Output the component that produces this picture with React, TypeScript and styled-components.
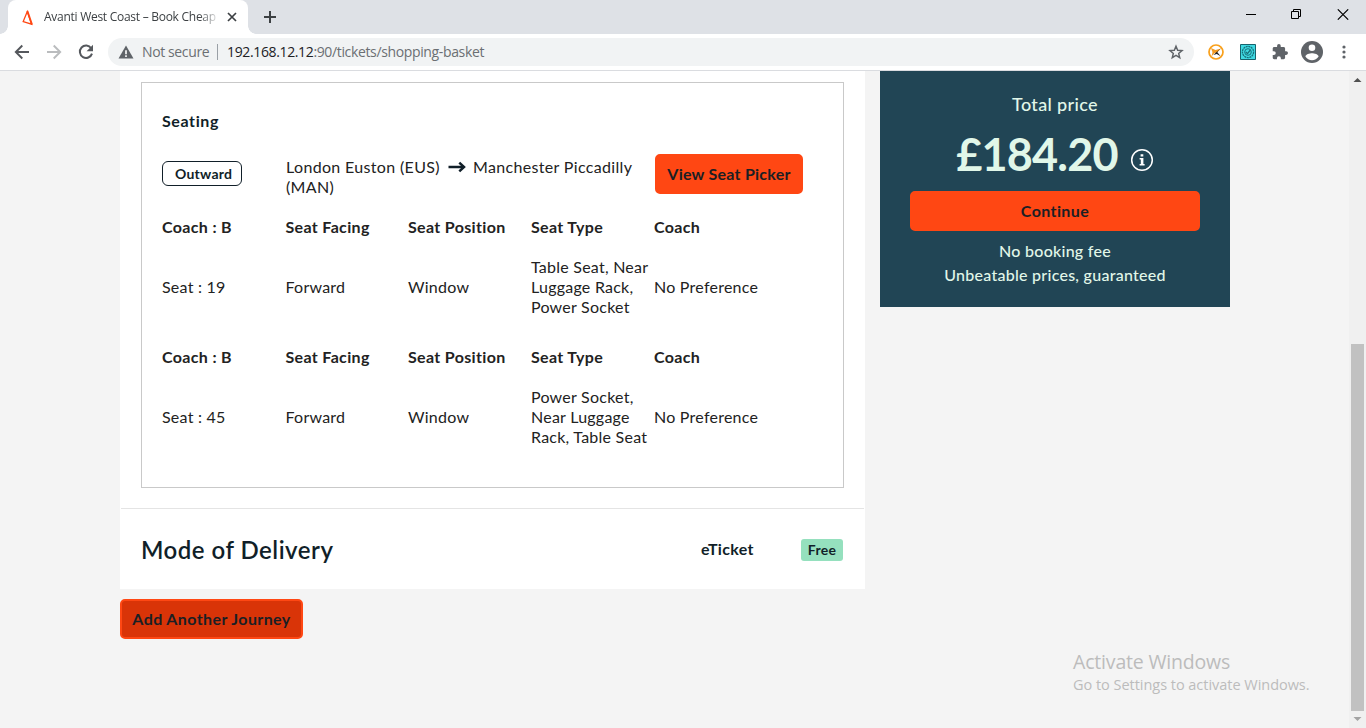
import React from 'react';
import styled, { createGlobalStyle } from 'styled-components';

const brandFont = `Lato, "Liberation Sans", sans-serif`;
const systemFont = `"Open Sans", "Noto Sans", sans-serif`;
const ink = '#111f29';

const GlobalStyle = createGlobalStyle`
  * { box-sizing: border-box; }
  body { margin: 0; background: #f4f4f4; overflow: hidden; }
  button { font: inherit; border: 0; padding: 0; margin: 0; background: none; }
  svg { display: block; flex: none; }
`;

const Window = styled.div`
  display: flex;
  flex-direction: column;
  width: 1366px;
  height: 728px;
  overflow: hidden;
  position: relative;
  font-family: ${brandFont};
`;

/* Browser frame */
const TabStrip = styled.div`
  display: flex;
  height: 34px;
  background: #dee1e6;
  padding-left: 8px;
  flex: none;
`;
const Tab = styled.div`
  display: flex;
  align-items: center;
  width: 240px;
  background: #fff;
  border-radius: 8px 8px 0 0;
  padding-left: 13px;
  position: relative;
  &::before, &::after {
    content: '';
    position: absolute;
    bottom: 0;
    width: 8px;
    height: 8px;
  }
  &::before { left: -8px; background: radial-gradient(circle at 0 0, #dee1e6 7.5px, #fff 8px); }
  &::after { right: -8px; background: radial-gradient(circle at 100% 0, #dee1e6 7.5px, #fff 8px); }
`;
const TabTitle = styled.span`
  width: 173px;
  margin-left: 9px;
  overflow: hidden;
  white-space: nowrap;
  font: 400 12px/16px ${systemFont};
  letter-spacing: -0.27px;
  color: #3c4043;
  mask-image: linear-gradient(to right, #000 155px, transparent 176px);
`;
const TabClose = styled.button`
  margin-left: 10px;
  height: 10px;
`;
const NewTab = styled.button`
  margin-left: 16px;
  align-self: center;
`;
const WindowControls = styled.div`
  display: flex;
  align-items: center;
  gap: 35px;
  margin-left: auto;
  padding: 0 17px 5px 0;
`;
const Toolbar = styled.div`
  display: flex;
  align-items: center;
  height: 37px;
  padding: 0 10px 1px 14px;
  background: #fff;
  border-bottom: 1px solid #dadce0;
  flex: none;
`;
const NavButtons = styled.div`
  display: flex;
  align-items: center;
  gap: 16px;
  width: 94px;
`;
const AddressBar = styled.div`
  display: flex;
  align-items: center;
  width: 1086px;
  height: 28px;
  padding: 0 10px 0 10px;
  border-radius: 14px;
  background: #f1f3f4;
  font: 400 14px/20px ${systemFont};
  color: #6b6f73;
`;
const NotSecure = styled.span`
  margin-left: 8px;
  width: 67px;
  letter-spacing: -0.38px;
  white-space: nowrap;
`;
const AddressDivider = styled.span`
  width: 1px;
  height: 16px;
  margin: 0 9px 0 8px;
  background: #9aa0a6;
`;
const Url = styled.span`
  flex: 1;
  letter-spacing: -0.36px;
  b { font-weight: 400; color: #202124; }
`;
const Extensions = styled.div`
  display: flex;
  align-items: center;
  margin-left: 14px;
  gap: 16px;
`;
const ProfileIcon = styled.div`margin: 0 3px 0 -3px;`;

/* Page */
const Viewport = styled.div`
  display: flex;
  flex: 1;
  min-height: 0;
`;
const Page = styled.main`
  display: flex;
  align-items: flex-start;
  gap: 15px;
  flex: 1;
  padding-left: 120px;
  background: #f4f4f4;
  color: #222;
`;
const Basket = styled.section`width: 745px;`;
const Card = styled.div`
  height: 518px;
  padding-top: 11px;
  background: #fff;
`;
const SeatingBox = styled.div`
  width: 703px;
  height: 406px;
  margin-left: 21px;
  padding: 28px 20px 0;
  border: 1px solid #c9c9c9;
`;
const SeatingTitle = styled.h3`
  margin: 0;
  font-size: 16px;
  line-height: 20px;
  font-weight: 700;
  letter-spacing: 0.6px;
  color: ${ink};
`;
const RouteRow = styled.div`
  display: flex;
  height: 40px;
  margin-top: 23px;
`;
const Direction = styled.span`
  width: 80px;
  height: 25px;
  margin-top: 7px;
  padding-left: 12px;
  border: 1px solid ${ink};
  border-radius: 6px;
  font-size: 14px;
  line-height: 24px;
  font-weight: 700;
  letter-spacing: 0.25px;
  color: ${ink};
`;
const Route = styled.div`
  width: 369px;
  margin: 3px 0 0 44px;
  font-size: 16px;
  line-height: 20px;
  letter-spacing: 0.34px;
  svg { display: inline-block; margin: 0 7px 0 8px; }
`;
const Button = styled.button<{ $width: number; $track?: number; $active?: boolean }>`
  width: ${p => p.$width}px;
  height: 40px;
  border-radius: 5px;
  border: 2px solid #ff4713;
  background: ${p => (p.$active ? '#d93408' : '#ff4713')};
  font: 700 16px/36px ${brandFont};
  letter-spacing: ${p => p.$track ?? 0.25}px;
  color: #1b1f24;
  white-space: nowrap;
`;
const SeatGrid = styled.div<{ $top: number }>`
  display: grid;
  grid-template-columns: 123.5px 122.5px 123px 123px 123px;
  row-gap: 20px;
  align-items: center;
  margin-top: ${p => p.$top}px;
  font-size: 16px;
  line-height: 20px;
`;
const HeadCell = styled.span`
  font-weight: 700;
  letter-spacing: 0.34px;
  white-space: nowrap;
`;
const Cell = styled.span`
  letter-spacing: 0.24px;
  white-space: pre;
`;
const Delivery = styled.div`
  display: flex;
  align-items: center;
  height: 81px;
  margin: 20px 1px 0;
  padding: 0 21px 0 20px;
  border-top: 1px solid #e4e4e4;
  color: ${ink};
`;
const DeliveryTitle = styled.h2`
  flex: 1;
  margin: 0;
  font-size: 24px;
  line-height: 32px;
  font-weight: 600;
  letter-spacing: 0.5px;
  padding-top: 1px;
`;
const DeliveryType = styled.span`
  width: 100px;
  font-size: 16px;
  line-height: 20px;
  font-weight: 700;
  letter-spacing: 0.3px;
`;
const FreeTag = styled.span`
  width: 42px;
  height: 22px;
  margin-top: 1px;
  border-radius: 3px;
  background: #95e0be;
  text-align: center;
  font-size: 14px;
  line-height: 22px;
  font-weight: 700;
  letter-spacing: 0.3px;
`;
const Actions = styled.div`padding-top: 10px;`;

const Summary = styled.aside`
  display: flex;
  flex-direction: column;
  align-items: center;
  width: 350px;
  height: 236px;
  padding-top: 21px;
  background: #214555;
  color: #e1f7e9;
`;
const TotalLabel = styled.div`
  font-size: 18px;
  line-height: 24px;
  font-weight: 500;
  letter-spacing: 0.35px;
`;
const TotalRow = styled.div`
  display: flex;
  align-items: center;
  height: 75px;
  gap: 12px;
  svg { margin-top: 12px; }
`;
const TotalPrice = styled.span`
  font-size: 45px;
  line-height: 60px;
  font-weight: 700;
  letter-spacing: -0.85px;
`;
const Notes = styled.p`
  margin: 8px 0 0;
  text-align: center;
  font-size: 16px;
  line-height: 24px;
  font-weight: 500;
  letter-spacing: 0.26px;
`;

const ScrollTrack = styled.div`
  display: flex;
  flex-direction: column;
  align-items: center;
  width: 17px;
  padding: 7px 0 6px;
  background: #f0f0f0;
`;
const ScrollThumb = styled.div`
  width: 13px;
  height: 367px;
  margin: 262px 0 6px;
  background: #c1c1c1;
`;

const Watermark = styled.div`
  position: absolute;
  left: 1073px;
  top: 650px;
  font-family: ${systemFont};
  color: #bcbcbc;
  white-space: nowrap;
`;
const WatermarkTitle = styled.div`
  font-size: 19.5px;
  line-height: 24px;
  letter-spacing: -0.18px;
`;
const WatermarkText = styled.div`
  font-size: 14.5px;
  line-height: 21px;
  letter-spacing: -0.03px;
`;

const Logo = () => (
  <svg width="14" height="17" viewBox="0 0 14 17" fill="none" stroke="#ff4713">
    <path d="M6.3 2.6 2.2 12.6 10.6 15.2Z" strokeWidth="1.3" />
    <path d="M6.4 2 11 15.6" strokeWidth="1.8" />
  </svg>
);
const Star = () => (
  <svg width="16" height="16" viewBox="0 0 24 24" fill="none" stroke="#5f6368" strokeWidth="2.2">
    <path d="m12 3.4 2.5 6 6.5.5-5 4.2 1.6 6.4L12 17.1l-5.6 3.4L8 14.1 3 9.9l6.500-.5z" />
  </svg>
);
const RouteArrow = () => (
  <svg width="18" height="12" viewBox="0 0 18 12" fill="none" stroke={ink} strokeWidth="2.5">
    <path d="M.5 6h15.5" />
    <path d="m11.300 1.700 4.700 4.300-4.700 4.300" />
  </svg>
);

type Seat = { seat: string; type: string };
const seats: Seat[] = [
  { seat: '19', type: 'Table Seat, Near\nLuggage Rack,\nPower Socket' },
  { seat: '45', type: 'Power Socket,\nNear Luggage\nRack, Table Seat' },
];

function BrowserFrame() {
  return (
    <>
      <TabStrip>
        <Tab>
          <Logo />
          <TabTitle>Avanti West Coast – Book Cheap</TabTitle>
          <TabClose aria-label="Close tab">
            <svg width="10" height="10" viewBox="0 0 10 10" stroke="#3c4043" strokeWidth="1.7"><path d="m1 1 8 8M9 1 1 9" /></svg>
          </TabClose>
        </Tab>
        <NewTab aria-label="New tab">
          <svg width="12" height="12" viewBox="0 0 12 12" stroke="#3c4043" strokeWidth="2"><path d="M6 0v12M0 6h12" /></svg>
        </NewTab>
        <WindowControls>
          <svg width="10" height="11" viewBox="0 0 10 11" stroke="#000"><path d="M0 5.500h10" /></svg>
          <svg width="11" height="11" viewBox="0 0 11 11" fill="none" stroke="#000"><path d="M.5 2.500h7v7h-7zM2.500 2.500v-2h7v7h-2" /></svg>
          <svg width="12" height="11" viewBox="0 0 12 11" stroke="#000" strokeWidth="1.100"><path d="m.8.3 10.400 10.400M11.200.3.8 10.700" /></svg>
        </WindowControls>
      </TabStrip>
      <Toolbar>
        <NavButtons>
          <svg width="16" height="16" viewBox="0 0 16 16" fill="none" stroke="#55585d" strokeWidth="1.9"><path d="M15 8H2.200M8.300 1.500 1.800 8l6.500 6.500" /></svg>
          <svg width="16" height="16" viewBox="0 0 16 16" fill="none" stroke="#babcbe" strokeWidth="1.9"><path d="M1 8h12.800M7.700 1.500 14.200 8l-6.500 6.500" /></svg>
          <svg width="16" height="16" viewBox="0 0 16 16"><path d="M13.200 4.200A6.200 6.200 0 1 0 14 9.600" fill="none" stroke="#55585d" strokeWidth="2" /><path d="M15 .8v6.400H8.600z" fill="#55585d" /></svg>
        </NavButtons>
        <AddressBar>
          <svg width="16" height="14" viewBox="0 0 16 14"><path d="M8 .5 15.500 13.500H.5z" fill="#5f6368" /><path d="M7.200 5.200h1.600v4H7.200zM7.200 10.300h1.600v1.600H7.200z" fill="#fff" /></svg>
          <NotSecure>Not secure</NotSecure>
          <AddressDivider />
          <Url><b>192.168.12.12</b>:90/tickets/shopping-basket</Url>
          <Star />
        </AddressBar>
        <Extensions>
          <svg width="16" height="16" viewBox="0 0 16 16"><circle cx="8" cy="8" r="7" fill="#fff" stroke="#f9a01b" strokeWidth="1.700" /><path d="m3 4 4.500 2 5.500-1.500-4 4.300-2.500.2-3 3.500 1-4.200z" fill="#f39a21" /><path d="m13.200 4-4 4 3.400 4.200-3.800-2.200-3.500 1 3.500-3.200z" fill="#222" /></svg>
          <svg width="16" height="16" viewBox="0 0 16 16"><path d="M.5.5h15v15H.5z" fill="#3fd9e2" stroke="#17636d" /><g fill="none" stroke="#17717b"><circle cx="8" cy="8" r="5.600" strokeWidth="1.300" strokeDasharray="2 .6" /><circle cx="8" cy="8" r="3.300" /><path d="m5.800 8 1.700 1.600L10.300 6" strokeWidth="1.300" /></g></svg>
          <svg width="16" height="16" viewBox="1 1 22 22" fill="#5f6368"><path d="M20.500 11H19V7c0-1.100-.9-2-2-2h-4V3.500a2.500 2.500 0 0 0-5 0V5H4c-1.100 0-2 .9-2 2v3.800h1.500a2.700 2.700 0 0 1 0 5.400H2V20c0 1.100.9 2 2 2h3.800v-1.500a2.700 2.700 0 0 1 5.400 0V22H17c1.100 0 2-.9 2-2v-4h1.500a2.500 2.500 0 0 0 0-5z" /></svg>
          <ProfileIcon>
            <svg width="22" height="22" viewBox="0 0 22 22"><circle cx="11" cy="11" r="11" fill="#5f6368" /><circle cx="11" cy="6.700" r="3.300" fill="#fff" /><path d="M4.400 15.600c0-2.200 4.400-3.400 6.600-3.400s6.600 1.200 6.600 3.400a7.900 7.900 0 0 1-13.200 0z" fill="#fff" /></svg>
          </ProfileIcon>
          <svg width="4" height="14" viewBox="0 0 4 14" fill="#5f6368"><circle cx="2" cy="2" r="1.600" /><circle cx="2" cy="7" r="1.600" /><circle cx="2" cy="12" r="1.600" /></svg>
        </Extensions>
      </Toolbar>
    </>
  );
}

function SeatDetails({ seat, type, top }: Seat & { top: number }) {
  return (
    <SeatGrid $top={top}>
      <HeadCell>Coach : B</HeadCell>
      <HeadCell>Seat Facing</HeadCell>
      <HeadCell>Seat Position</HeadCell>
      <HeadCell>Seat Type</HeadCell>
      <HeadCell>Coach</HeadCell>
      <Cell>Seat : {seat}</Cell>
      <Cell>Forward</Cell>
      <Cell>Window</Cell>
      <Cell>{type}</Cell>
      <Cell>No Preference</Cell>
    </SeatGrid>
  );
}

export default function App() {
  return (
    <Window>
      <GlobalStyle />
      <BrowserFrame />
      <Viewport>
        <Page>
          <Basket>
            <Card>
              <SeatingBox>
                <SeatingTitle>Seating</SeatingTitle>
                <RouteRow>
                  <Direction>Outward</Direction>
                  <Route>
                    London Euston (EUS)<RouteArrow />Manchester Piccadilly<br />(MAN)
                  </Route>
                  <Button $width={148}>View Seat Picker</Button>
                </RouteRow>
                {seats.map((s, i) => (
                  <SeatDetails key={s.seat} {...s} top={i === 0 ? 23 : 30} />
                ))}
              </SeatingBox>
              <Delivery>
                <DeliveryTitle>Mode of Delivery</DeliveryTitle>
                <DeliveryType>eTicket</DeliveryType>
                <FreeTag>Free</FreeTag>
              </Delivery>
            </Card>
            <Actions>
              <Button $width={183} $track={0.4} $active>Add Another Journey</Button>
            </Actions>
          </Basket>
          <Summary>
            <TotalLabel>Total price</TotalLabel>
            <TotalRow>
              <TotalPrice>£184.20</TotalPrice>
              <svg width="24" height="24" viewBox="0 0 24 24"><circle cx="12" cy="12" r="10.300" fill="none" stroke="#fff" strokeWidth="1.500" /><path d="M10.600 6.200h2.700v2.400h-2.700zM9.600 10h3.800v6h1.200v1.500H9.600V16h1.200v-4.500H9.600z" fill="#fff" /></svg>
            </TotalRow>
            <Button $width={290} $track={0.4}>Continue</Button>
            <Notes>No booking fee<br />Unbeatable prices, guaranteed</Notes>
          </Summary>
        </Page>
        <ScrollTrack>
          <svg width="9" height="4" viewBox="0 0 9 4" fill="#505050"><path d="M.5 4 4.500 0 8.500 4z" /></svg>
          <ScrollThumb />
          <svg width="9" height="4" viewBox="0 0 9 4" fill="#a3a3a3"><path d="M.5 0h8l-4 4z" /></svg>
        </ScrollTrack>
      </Viewport>
      <Watermark>
        <WatermarkTitle>Activate Windows</WatermarkTitle>
        <WatermarkText>Go to Settings to activate Windows.</WatermarkText>
      </Watermark>
    </Window>
  );
}
